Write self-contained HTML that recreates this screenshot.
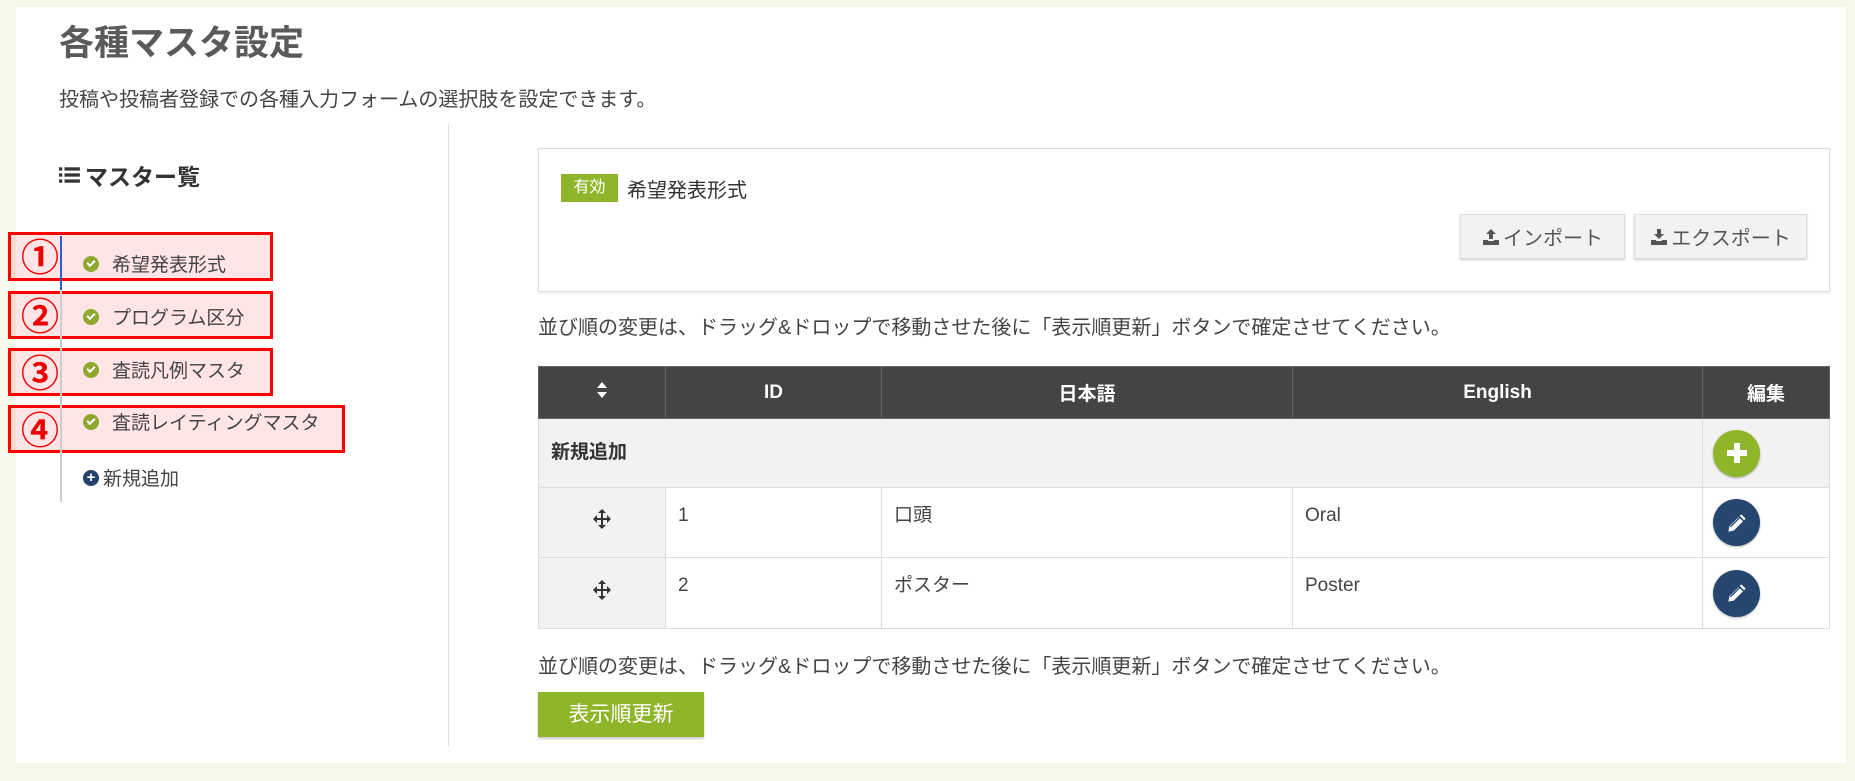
<!DOCTYPE html>
<html><head><meta charset="utf-8"><style>
*{box-sizing:border-box;margin:0;padding:0}
body{width:1855px;height:781px;background:#f3f8e8;font-family:"Liberation Sans","Noto Sans CJK JP",sans-serif;color:#555;position:relative;overflow:hidden}
.panel{position:absolute;left:16px;top:7px;width:1830px;height:756px;background:#fff}
.abs{position:absolute}
h1{position:absolute;left:59px;top:15px;font-size:35px;font-weight:bold;color:#5a5a5a}
.sub{left:59px;top:83px;font-size:20px;color:#444}
.vdiv{left:448px;top:124px;width:1px;height:622px;background:#ddd}
.nav{left:60px;top:236px;width:2px;height:266px;background:#ccc}
.navb{left:60px;top:236px;width:2px;height:54px;background:#3a5bc7}
.item{position:absolute;left:83px;font-size:19px;color:#444;display:flex;align-items:center}
.chk{width:16px;height:16px;border-radius:50%;background:#8fa830;margin-right:13px;position:relative}
.chk:after{content:"";position:absolute;left:4px;top:4px;width:6px;height:3px;border-left:2px solid #fff;border-bottom:2px solid #fff;transform:rotate(-45deg)}
.rbox{position:absolute;left:8px;border:3px solid #f00;background:rgba(255,0,0,0.1)}
.num{position:absolute;left:21px;font-size:38px;font-weight:bold;color:#e00;font-family:"Noto Sans CJK JP",sans-serif;line-height:1}
.card{left:538px;top:148px;width:1292px;height:144px;border:1px solid #ddd;box-shadow:0 1px 2px rgba(0,0,0,.1)}
.badge{left:561px;top:174px;width:57px;height:28px;background:#8fb52a;color:#fff;font-size:16px;text-align:center;line-height:28px}
.btn{position:absolute;top:214px;height:45px;background:#f2f2f2;border:1px solid #ddd;box-shadow:0 1px 2px rgba(0,0,0,.2);font-size:20px;color:#555;display:flex;align-items:center;justify-content:center;gap:3px}
.note{left:538px;font-size:20px;color:#444}
table{position:absolute;left:538px;top:366px;width:1292px;border-collapse:collapse;font-size:19px;table-layout:fixed}
th{background:#444;color:#fff;height:52px;border:1px solid #666;font-weight:bold}
td{border:1px solid #ddd;vertical-align:top;padding:17px 12px 8px;color:#444;line-height:1.2}
td.e{vertical-align:middle;padding:0 0 0 10px}
.circ{width:47px;height:47px;border-radius:50%;display:flex;align-items:center;justify-content:center;box-shadow:0 1px 2px rgba(0,0,0,.3)}
.save{left:538px;top:692px;width:166px;height:45px;background:#8fb52a;color:#fff;font-size:21px;text-align:center;line-height:45px;box-shadow:0 2px 2px rgba(0,0,0,.2)}
</style></head><body>
<div class="panel"></div>
<h1>各種マスタ設定</h1>
<div class="abs sub">投稿や投稿者登録での各種入力フォームの選択肢を設定できます。</div>
<div class="abs vdiv"></div>
<div class="abs" style="left:59px;top:158px;font-size:23px;font-weight:bold;color:#333;display:flex;align-items:center">
<svg width="22" height="18" viewBox="0 0 20 16" style="margin-right:4px"><g fill="#333"><rect x="0" y="1" width="3" height="3"/><rect x="5" y="1" width="14" height="3"/><rect x="0" y="6.5" width="3" height="3"/><rect x="5" y="6.5" width="14" height="3"/><rect x="0" y="12" width="3" height="3"/><rect x="5" y="12" width="14" height="3"/></g></svg>マスター覧</div>
<div class="rbox" style="top:232px;width:265px;height:49px"></div>
<div class="rbox" style="top:291px;width:265px;height:48px"></div>
<div class="rbox" style="top:348px;width:265px;height:48px"></div>
<div class="rbox" style="top:405px;width:337px;height:48px"></div>
<div class="abs nav"></div><div class="abs navb"></div>
<div class="num" style="top:236px">①</div>
<div class="num" style="top:295px">②</div>
<div class="num" style="top:352px">③</div>
<div class="num" style="top:409px">④</div>
<div class="item" style="top:250px"><span class="chk"></span>希望発表形式</div>
<div class="item" style="top:303px"><span class="chk"></span>プログラム区分</div>
<div class="item" style="top:356px"><span class="chk"></span>査読凡例マスタ</div>
<div class="item" style="top:408px"><span class="chk"></span>査読レイティングマスタ</div>
<div class="item" style="top:464px"><span style="width:16px;height:16px;border-radius:50%;background:#24406b;color:#fff;font-size:15px;line-height:16px;text-align:center;font-weight:bold;margin-right:4px">+</span>新規追加</div>
<div class="abs card"></div>
<div class="abs badge">有効</div>
<div class="abs" style="left:627px;top:174px;font-size:20px;color:#333">希望発表形式</div>
<div class="btn" style="left:1460px;width:165px"><svg width="18" height="18" viewBox="0 0 18 18"><path d="M9 1 L14 6 H11 V11 H7 V6 H4 Z M1 12 H6 V13 H12 V12 H17 V17 H1 Z" fill="#555"/></svg>インポート</div>
<div class="btn" style="left:1634px;width:173px"><svg width="18" height="18" viewBox="0 0 18 18"><path d="M7 1 H11 V6 H14 L9 11 L4 6 H7 Z M1 12 H6 V13 H12 V12 H17 V17 H1 Z" fill="#555"/></svg>エクスポート</div>
<div class="abs note" style="top:311px">並び順の変更は、ドラッグ&amp;ドロップで移動させた後に「表示順更新」ボタンで確定させてください。</div>
<table>
<colgroup><col style="width:127px"><col style="width:216px"><col style="width:411px"><col style="width:410px"><col></colgroup>
<tr><th><svg width="12" height="18" viewBox="0 0 12 18"><path d="M6 1 L11 7 H1 Z M6 17 L11 11 H1 Z" fill="#fff"/></svg></th><th>ID</th><th>日本語</th><th>English</th><th>編集</th></tr>
<tr style="height:69px;background:#f2f2f2"><td colspan="4" style="vertical-align:middle;font-weight:bold;color:#333;padding:0 12px">新規追加</td><td class="e"><div class="circ" style="background:#8fb52a"><svg width="24" height="24" viewBox="0 0 24 24"><path d="M9 2H15V9H22V15H15V22H9V15H2V9H9Z" fill="#fff"/></svg></div></td></tr>
<tr style="height:70px"><td style="background:#f2f2f2;text-align:center;vertical-align:middle;padding:0"><svg width="18" height="20" viewBox="0 0 18 20"><path d="M9 0 L13 4 H10 V9 H14 V6 L18 10 L14 14 V11 H10 V16 H13 L9 20 L5 16 H8 V11 H4 V14 L0 10 L4 6 V9 H8 V4 H5 Z" fill="#333"/></svg></td><td>1</td><td>口頭</td><td>Oral</td><td class="e"><div class="circ" style="background:#25476f"><svg width="26" height="26" viewBox="0 0 24 24"><path d="M4 20 L5 15 L16 4 L20 8 L9 19 Z" fill="#fff"/><path d="M14 6 L18 10" stroke="#25476f" stroke-width="1.5"/><path d="M6 15.5 L15 6.5" stroke="#25476f" stroke-width="1.2"/></svg></div></td></tr>
<tr style="height:71px"><td style="background:#f2f2f2;text-align:center;vertical-align:middle;padding:0"><svg width="18" height="20" viewBox="0 0 18 20"><path d="M9 0 L13 4 H10 V9 H14 V6 L18 10 L14 14 V11 H10 V16 H13 L9 20 L5 16 H8 V11 H4 V14 L0 10 L4 6 V9 H8 V4 H5 Z" fill="#333"/></svg></td><td>2</td><td>ポスター</td><td>Poster</td><td class="e"><div class="circ" style="background:#25476f"><svg width="26" height="26" viewBox="0 0 24 24"><path d="M4 20 L5 15 L16 4 L20 8 L9 19 Z" fill="#fff"/><path d="M14 6 L18 10" stroke="#25476f" stroke-width="1.5"/><path d="M6 15.5 L15 6.5" stroke="#25476f" stroke-width="1.2"/></svg></div></td></tr>
</table>
<div class="abs note" style="top:650px">並び順の変更は、ドラッグ&amp;ドロップで移動させた後に「表示順更新」ボタンで確定させてください。</div>
<div class="abs save">表示順更新</div>
</body></html>
